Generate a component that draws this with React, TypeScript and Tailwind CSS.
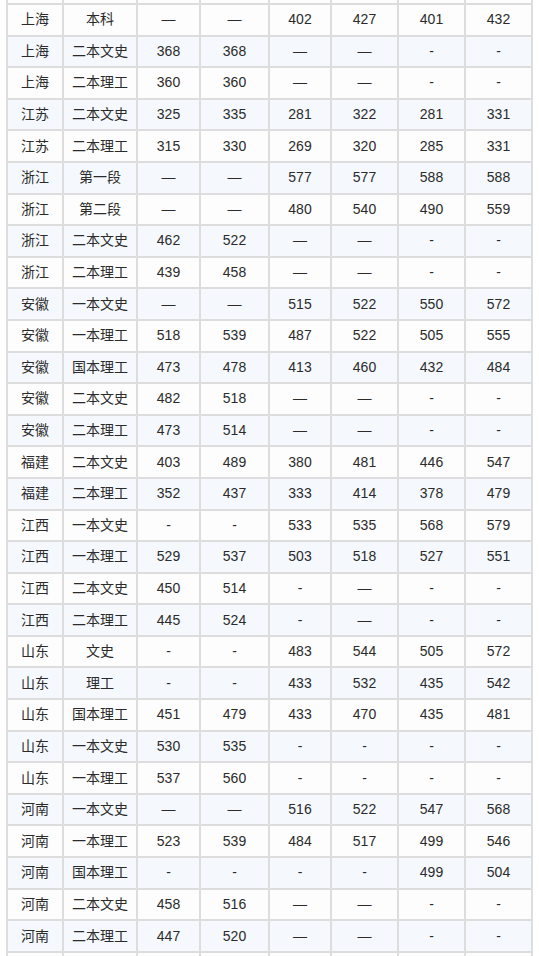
import React from 'react';

const D = '—';
const H = '-';

const rows: string[][] = [
  ['上海', '本科', D, D, '402', '427', '401', '432'],
  ['上海', '二本文史', '368', '368', D, D, H, H],
  ['上海', '二本理工', '360', '360', D, D, H, H],
  ['江苏', '二本文史', '325', '335', '281', '322', '281', '331'],
  ['江苏', '二本理工', '315', '330', '269', '320', '285', '331'],
  ['浙江', '第一段', D, D, '577', '577', '588', '588'],
  ['浙江', '第二段', D, D, '480', '540', '490', '559'],
  ['浙江', '二本文史', '462', '522', D, D, H, H],
  ['浙江', '二本理工', '439', '458', D, D, H, H],
  ['安徽', '一本文史', D, D, '515', '522', '550', '572'],
  ['安徽', '一本理工', '518', '539', '487', '522', '505', '555'],
  ['安徽', '国本理工', '473', '478', '413', '460', '432', '484'],
  ['安徽', '二本文史', '482', '518', D, D, H, H],
  ['安徽', '二本理工', '473', '514', D, D, H, H],
  ['福建', '二本文史', '403', '489', '380', '481', '446', '547'],
  ['福建', '二本理工', '352', '437', '333', '414', '378', '479'],
  ['江西', '一本文史', H, H, '533', '535', '568', '579'],
  ['江西', '一本理工', '529', '537', '503', '518', '527', '551'],
  ['江西', '二本文史', '450', '514', H, D, H, H],
  ['江西', '二本理工', '445', '524', H, D, H, H],
  ['山东', '文史', H, H, '483', '544', '505', '572'],
  ['山东', '理工', H, H, '433', '532', '435', '542'],
  ['山东', '国本理工', '451', '479', '433', '470', '435', '481'],
  ['山东', '一本文史', '530', '535', H, H, H, H],
  ['山东', '一本理工', '537', '560', H, H, H, H],
  ['河南', '一本文史', D, D, '516', '522', '547', '568'],
  ['河南', '一本理工', '523', '539', '484', '517', '499', '546'],
  ['河南', '国本理工', H, H, H, H, '499', '504'],
  ['河南', '二本文史', '458', '516', D, D, H, H],
  ['河南', '二本理工', '447', '520', D, D, H, H],
];

const cols = 'grid grid-cols-[54px_72px_61px_67px_60px_65px_65px_65px] gap-x-[2px]';

// empty strip of a row cut off by the scroll position
function EdgeRow({ bg }: { bg: string }) {
  return (
    <div className={cols}>
      {Array.from({ length: 8 }).map((_, i) => (
        <div key={i} className={`h-[3px] ${bg}`} />
      ))}
    </div>
  );
}

export default function App() {
  return (
    <div
      className="bg-white h-screen overflow-hidden pl-[6px]"
      style={{ fontFamily: '"Liberation Sans", Arial, "Noto Sans CJK SC", sans-serif' }}
    >
      <div className="w-[527px] bg-[#dddddd] px-[2px] flex flex-col gap-y-[2px]">
        <EdgeRow bg="bg-[#fdfdfd]" />
        {rows.map((r, ri) => (
          <div key={ri} className={cols}>
            {r.map((c, ci) => (
              <div
                key={ci}
                className={`h-[29.6px] flex items-center justify-center text-[14px] text-[#2b2b2b] ${
                  ri % 2 === 0 ? 'bg-[#fdfdfd]' : 'bg-[#f5f9fe]'
                }`}
              >
                {c}
              </div>
            ))}
          </div>
        ))}
        <EdgeRow bg="bg-[#fdfdfd]" />
      </div>
    </div>
  );
}
